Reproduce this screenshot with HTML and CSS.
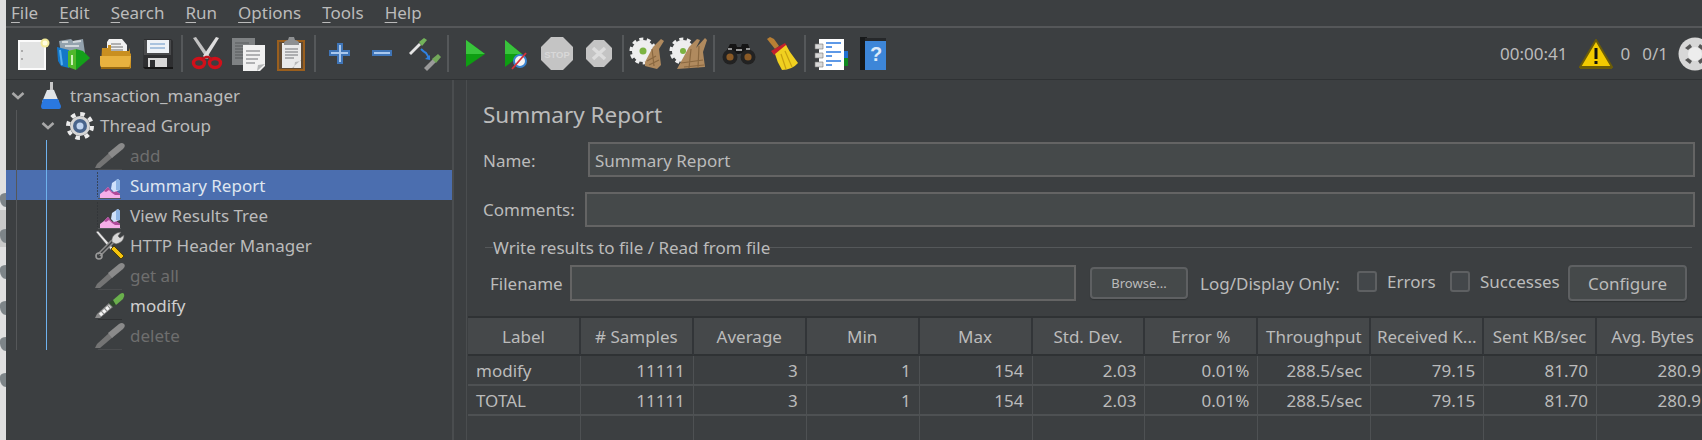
FILE: index.html
```html
<!DOCTYPE html>
<html lang="en">
<head>
<meta charset="utf-8">
<title>Apache JMeter - Summary Report</title>
<link rel="stylesheet" href="styles.css">
</head>
<body>
<svg class="defs" aria-hidden="true">
  <symbol id="chev" viewBox="0 0 24 30"><path d="M6.500 13l5.500 5 5.500-5" fill="none" stroke="#a8a8a8" stroke-width="2.600"/></symbol>
  <symbol id="pipe-off" viewBox="0 0 30 30">
    <path d="M0 28l2-4 12-11 4 4L5 28z" fill="#747474"/><path d="M13 13l11-9q3-2 5 0t-1 5L17 18z" fill="#8a8a8a"/><path d="M3 29.500h24" stroke="#4a4c4e"/>
  </symbol>
  <symbol id="pipe-on" viewBox="0 0 30 30">
    <path d="M0 28l2-4 12-11 4 4L5 28z" fill="#8c8c8c"/><path d="M5 25l10-9" stroke="#f4f4f4" stroke-width="3.400" stroke-dasharray="3 1.200"/><path d="M14 13l3-3 4 4-3 3z" fill="#2e4a2a"/><path d="M18 10l7-6q3-2 4 0t-1 5l-7 6z" fill="#6ab04c"/><path d="M3 29.500h24" stroke="#2e3032"/>
  </symbol>
  <symbol id="graph" viewBox="0 0 30 30">
    <path d="M2.500 2v25" stroke="#2f3336" stroke-opacity=".7" stroke-dasharray="2 1"/><path d="M3 28.500h23" stroke="#55585a"/>
    <path d="M5 28v-4l4-3 4-4 4 5 4-1 4 3v4z" fill="#f6aee8"/><path d="M9 21l4-4 4 5 4-1 4 3v1h-5l-3-2-3-3-3 2z" fill="#b04a9a"/>
    <path d="M16 19l1-6 6-4 2 2v9l-6 2z" fill="#cfe2fb"/><path d="M21 10l2-1 2 2v9h-4z" fill="#8fb6e6"/>
  </symbol>
  <symbol id="tools" viewBox="0 0 30 30">
    <path d="M1 2l2-1 15 17-2 2z" fill="#e8e8e8" stroke="#555" stroke-width=".5"/>
    <path d="M16 19l3-3 10 10-3 3z" fill="#f4c20d" stroke="#3a3000" stroke-width=".8"/>
    <path d="M4 25L18 11" stroke="#8e8e8e" stroke-width="4.500"/><path d="M4 25L18 11" stroke="#3c3f41" stroke-width="1.400"/>
    <circle cx="4" cy="26" r="3" fill="none" stroke="#999" stroke-width="1.600"/>
    <path d="M17 12q-1-6 5-9l4-1-3 4 2 2 4-3q0 6-5 8l-3 1z" fill="#d8d8d8" stroke="#666" stroke-width=".6"/>
  </symbol>
</svg>

<div class="strip">
  <i class="blob"></i><i class="blob"></i><i class="blob"></i><i class="blob"></i><i class="blob"></i><i class="blob"></i>
</div>

<div class="app">
  <nav class="menubar">
    <span><u>F</u>ile</span><span><u>E</u>dit</span><span><u>S</u>earch</span><span><u>R</u>un</span><span><u>O</u>ptions</span><span><u>T</u>ools</span><span><u>H</u>elp</span>
  </nav>

  <div class="toolbar">
    <!-- new -->
    <svg class="tool" viewBox="0 0 42 36"><rect x="7" y="4" width="28" height="30" fill="#fbfbfb"/><rect x="9" y="6" width="24" height="26" fill="#e2e3e3"/><path d="M10 15h2M10 23h2" stroke="#999" stroke-width="1.500"/><circle cx="34" cy="7" r="4.500" fill="#f2ea9a"/><circle cx="34" cy="7" r="2.500" fill="#fffde0"/></svg>
    <!-- templates -->
    <svg class="tool" viewBox="0 0 42 36"><path d="M6 5l12-2 2 2 10-2 2 14H8z" fill="#93a2ad"/><path d="M9 6h6M20 6l8-1M12 10h14" stroke="#d2d8dc" stroke-width="2"/><path d="M4 11l12 3v18L8 30 5 25z" fill="#1477c9"/><path d="M7 14l2 15" stroke="#54b0ee" stroke-width="2"/><path d="M15 15l8-2v21l-8-3z" fill="#4fb82b"/><path d="M23 13l7 2 7 7-7 6-7 6z" fill="#14a01a"/><path d="M19 19v10" stroke="#cdf0b8" stroke-width="2"/></svg>
    <!-- open -->
    <svg class="tool" viewBox="0 0 42 36"><path d="M12 6l2-3h13l5 6v10H12z" fill="#f1f1f1"/><path d="M16 8h10M16 11h12M16 14h12" stroke="#9a9a9a" stroke-width="1.400"/><path d="M7 12h6v-3h3v6h18l1-3v5l1 1v14q-1 1-3 1H9q-3-1-3-3z" fill="#c98f20"/><path d="M5 20h31l-1 8q-1 4-3 4H9q-4 0-4-4z" fill="#e8b23f"/><path d="M6 32h29" stroke="#9a6a10" stroke-width="2"/></svg>
    <!-- save -->
    <svg class="tool" viewBox="0 0 42 36"><path d="M7 3h27l2 2v28H8l-2-2z" fill="#2e2f31"/><path d="M7 4h27v15H7z" fill="#4a4b4d"/><rect x="10" y="4" width="22" height="13" fill="#eef2f6"/><path d="M13 8h15M13 12h15" stroke="#a9c3de" stroke-width="2"/><rect x="11" y="22" width="19" height="11" fill="#d8d8d8"/><rect x="13" y="24" width="5" height="8" fill="#2e2f31"/><path d="M6 31h30v2H8z" fill="#171717"/></svg>
    <i class="sep"></i>
    <!-- cut -->
    <svg class="tool" viewBox="0 0 42 36"><path d="M7 2l3-1 14 20-3 2z" fill="#c2c2c2"/><path d="M33 2l-3-1-13 19 3 3z" fill="#dedede"/><ellipse cx="13" cy="27" rx="5.500" ry="4.500" fill="none" stroke="#d0101a" stroke-width="3.400"/><ellipse cx="29" cy="27" rx="5.500" ry="4.500" fill="none" stroke="#d0101a" stroke-width="3.400"/><path d="M16 23l4-2h2l4 2" fill="none" stroke="#c0101a" stroke-width="2.400"/></svg>
    <!-- copy -->
    <svg class="tool" viewBox="0 0 42 36"><rect x="4" y="2" width="23" height="27" fill="#7f8284"/><path d="M7 7h14M7 10h14M7 13h14M7 16h14M7 19h14M7 22h14" stroke="#65686a" stroke-width="1.400"/><path d="M15 9h22v21l-5 5H15z" fill="#f1f1f1"/><path d="M18 15h14M18 19h14M18 23h12M18 27h9" stroke="#9a9c9e" stroke-width="1.400"/><path d="M37 28l-7 1-1 6z" fill="#b5b7b8"/></svg>
    <!-- paste -->
    <svg class="tool" viewBox="0 0 42 36"><rect x="7" y="4" width="28" height="31" fill="#9a5f1e"/><rect x="9" y="6" width="24" height="27" fill="#5f4a33"/><rect x="12" y="7" width="19" height="25" fill="#eaeaea"/><path d="M15 13h13M15 16h13M15 19h13M15 22h9" stroke="#9a9c9e" stroke-width="1.300"/><path d="M31 25l-6 1-1 6h-2l9-8z" fill="#b9b9b9"/><path d="M14 7q0-2 4-3l1-3h5l1 3q4 1 4 3v2H14z" fill="#8e9092"/></svg>
    <i class="sep"></i>
    <!-- plus -->
    <svg class="tool" viewBox="0 0 42 36"><path d="M18 7h6v7h7v6h-7v8h-6v-8h-8v-6h8z" fill="#3f75b8"/><path d="M20 9h2v7h7v2h-7v8h-2v-8h-8v-2h8z" fill="#a9c8ee"/></svg>
    <!-- minus -->
    <svg class="tool" viewBox="0 0 42 36"><rect x="11" y="14" width="20" height="6" fill="#3f75b8"/><rect x="13" y="16" width="16" height="2" fill="#a9c8ee"/></svg>
    <!-- toggle -->
    <svg class="tool" viewBox="0 0 42 36"><path d="M6 17l10-10 2 2-10 10z" fill="#e4e4e4"/><path d="M16 6l5-4 3 2-5 6z" fill="#73b45a"/><path d="M18 13q3 3 5 4l3 5" fill="none" stroke="#2f80e0" stroke-width="2"/><path d="M22 23l5 1 0-5z" fill="#2f80e0"/><path d="M21 32l9-9 3 3-9 9z" fill="#9a9a9a"/><path d="M29 23l6-5 3 3-5 6z" fill="#73a85a"/></svg>
    <i class="sep"></i>
    <!-- start -->
    <svg class="tool" viewBox="0 0 42 36"><path d="M14 4l19 14-19 13z" fill="#0e9e12"/><path d="M14 4l19 14H14z" fill="#39c43c"/></svg>
    <!-- start no timers -->
    <svg class="tool" viewBox="0 0 42 36"><path d="M11 4l17 14-17 13z" fill="#0e9e12"/><path d="M11 4l17 14H11z" fill="#39c43c"/><circle cx="26" cy="25" r="6" fill="#f4f4f4" stroke="#3a84d0" stroke-width="2"/><path d="M18 33L32 17" stroke="#d8323a" stroke-width="1.800"/></svg>
    <!-- stop -->
    <svg class="tool" viewBox="0 0 42 36"><path d="M15 1h12l10 10v13L27 34H15L5 24V11z" fill="#c4c4c4"/><text x="21" y="22" class="stop">STOP</text></svg>
    <!-- shutdown -->
    <svg class="tool" viewBox="0 0 42 36"><path d="M16 4h10l8 8v11l-8 8H16l-8-8V12z" fill="#c4c4c4"/><path d="M15 12l12 11M27 12L15 23" stroke="#dcdcdc" stroke-width="3.400"/></svg>
    <i class="sep"></i>
    <!-- clear -->
    <svg class="tool" viewBox="0 0 42 36"><circle cx="16" cy="15" r="11" fill="#eeeeee"/><circle cx="16" cy="15" r="12" fill="none" stroke="#eee" stroke-width="3" stroke-dasharray="4 3.500"/><circle cx="16" cy="15" r="3.500" fill="#7cb342"/><path d="M18 26l8-15 8-8 3 2-5 8 2 16-4 4-12-3z" fill="#b08a5e"/><path d="M20 25l9-5M22 29l10-5M25 13l2 17" stroke="#8a6840" stroke-width="1.200"/></svg>
    <!-- clear all -->
    <svg class="tool" viewBox="0 0 42 36"><circle cx="14" cy="15" r="11" fill="#eeeeee"/><circle cx="14" cy="15" r="12" fill="none" stroke="#eee" stroke-width="3" stroke-dasharray="4 3.500"/><circle cx="14" cy="15" r="3" fill="#7cb342"/><path d="M8 33l12-22 8-8 3 1-4 8 9-10 2 2-4 12 2 15z" fill="#b08a5e"/><path d="M12 27l22-3M15 31l20-2M22 13l-2 19M30 10l-1 22" stroke="#8a6840" stroke-width="1.200"/></svg>
    <i class="sep"></i>
    <!-- search -->
    <svg class="tool" viewBox="0 0 42 36"><path d="M12 8h6l1 3h4l1-3h6l3 8-13 2-12-2z" fill="#151515"/><circle cx="12" cy="21" r="7.500" fill="#222"/><circle cx="30" cy="21" r="7.500" fill="#222"/><circle cx="12" cy="21" r="3.600" fill="#8a5a26"/><circle cx="30" cy="21" r="3.600" fill="#8a5a26"/><path d="M10 13h4M28 13h4" stroke="#bbb" stroke-width="1.500"/><path d="M18 14h6" stroke="#999" stroke-width="2"/></svg>
    <!-- broom -->
    <svg class="tool" viewBox="0 0 42 36"><path d="M7 3l3-2 4 2 5 7-4 3z" fill="#b87f34"/><path d="M11 15l14-8 2 3-13 9z" fill="#c2202c"/><path d="M15 18l11-9 4 7 8 11q-6 7-16 7-5-8-7-16z" fill="#f0d020"/><path d="M21 18l5 15M25 15l7 16" stroke="#c8a010" stroke-width="1.200"/></svg>
    <i class="sep"></i>
    <!-- function helper -->
    <svg class="tool" viewBox="0 0 42 36"><rect x="10" y="3" width="25" height="31" fill="#fff"/><path d="M35 15h4v7h-4z" fill="#2070d0"/><path d="M35 22h4v8h-4z" fill="#108a20"/><path d="M6 8h8v5H6zM6 17h8v5H6zM6 26h8v5H6z" fill="#d8d8d8" stroke="#777" stroke-width=".6"/><path d="M17 7h15M17 16h15M17 25h15" stroke="#2a78e0" stroke-width="1.600"/><path d="M17 11h6M17 20h6M17 29h6" stroke="#2a78e0" stroke-width="1.600"/></svg>
    <!-- help -->
    <svg class="tool" viewBox="0 0 42 36"><rect x="9" y="1" width="7" height="33" fill="#17191a"/><rect x="14" y="5" width="21" height="29" fill="#3d86d8"/><path d="M14 2h21v3H14z" fill="#26282a"/><text x="25" y="25" class="qm">?</text></svg>

    <div class="status">
      <span class="time">00:00:41</span>
      <svg class="warn" viewBox="0 0 34 30"><path d="M17 1L33 28H1z" fill="#f2ca00" stroke="#6b5c08" stroke-width="2"/><path d="M1 28.500h32" stroke="#6b5c08" stroke-width="3"/><rect x="15.500" y="9" width="3" height="11" fill="#111"/><rect x="15.500" y="22" width="3" height="3" fill="#111"/></svg>
      <span class="count">0</span>
      <span class="threads">0/1</span>
      <svg class="globe" viewBox="0 0 34 34"><circle cx="17" cy="17" r="16.500" fill="#d7d7d7"/><circle cx="17" cy="17" r="7" fill="#ededed"/><path d="M7 11l5-4 2 3-4 3zM27 11l-5-4-2 3 4 3zM7 23l5 4 2-3-4-3zM27 23l-5 4-2-3 4-3z" fill="#555"/></svg>
    </div>
  </div>

  <div class="workspace">
    <aside class="tree">
      <i class="guide guide-root"></i>
      <i class="guide guide-group"></i>
      <div class="node d0">
        <svg class="chev"><use href="#chev"/></svg>
        <svg class="ico" viewBox="0 0 30 30"><path d="M15 2h3v7l1 2h-5l1-2z" fill="#c8c8c8"/><path d="M12 10h7l5 12H7z" fill="#e0e4e8"/><path d="M8 19h15l3 7q0 3-2 3H8q-2 0-2-3z" fill="#2a78e0"/></svg>
        <span>transaction_manager</span>
      </div>
      <div class="node d1">
        <svg class="chev"><use href="#chev"/></svg>
        <svg class="ico" viewBox="0 0 30 30"><circle cx="15" cy="16" r="10" fill="#d6d6d6"/><circle cx="15" cy="16" r="12" fill="none" stroke="#ececec" stroke-width="4" stroke-dasharray="4.500 4.900"/><circle cx="15" cy="16" r="7" fill="#48648c"/><circle cx="15" cy="16" r="3.500" fill="#c0d4f0"/></svg>
        <span>Thread Group</span>
      </div>
      <div class="node d2 off"><svg class="ico"><use href="#pipe-off"/></svg><span>add</span></div>
      <div class="node d2 selected"><svg class="ico"><use href="#graph"/></svg><span>Summary Report</span></div>
      <div class="node d2"><svg class="ico"><use href="#graph"/></svg><span>View Results Tree</span></div>
      <div class="node d2"><svg class="ico"><use href="#tools"/></svg><span>HTTP Header Manager</span></div>
      <div class="node d2 off"><svg class="ico"><use href="#pipe-off"/></svg><span>get all</span></div>
      <div class="node d2 on"><svg class="ico"><use href="#pipe-on"/></svg><span>modify</span></div>
      <div class="node d2 off"><svg class="ico"><use href="#pipe-off"/></svg><span>delete</span></div>
    </aside>

    <div class="gutter"></div>

    <main class="panel">
      <h1 class="title">Summary Report</h1>
      <div class="field-row name-row">
        <label class="name-label">Name:</label>
        <div class="input">Summary Report</div>
      </div>
      <div class="field-row comments-row">
        <label class="comments-label">Comments:</label>
        <div class="input"></div>
      </div>
      <div class="legend"><i class="rule rule-short"></i><span>Write results to file / Read from file</span><i class="rule"></i></div>
      <div class="file-row">
        <label class="file-label">Filename</label>
        <div class="input file-input"></div>
        <button class="btn browse">Browse...</button>
        <span class="log-label">Log/Display Only:</span>
        <span class="check"></span><span class="check-text errors">Errors</span>
        <span class="check"></span><span class="check-text successes">Successes</span>
        <button class="btn configure">Configure</button>
      </div>
      <div class="table-wrap">
        <table class="results">
          <thead>
            <tr><th>Label</th><th># Samples</th><th>Average</th><th>Min</th><th>Max</th><th>Std. Dev.</th><th>Error %</th><th>Throughput</th><th>Received K...</th><th>Sent KB/sec</th><th>Avg. Bytes</th></tr>
          </thead>
          <tbody>
            <tr><td>modify</td><td>11111</td><td>3</td><td>1</td><td>154</td><td>2.03</td><td>0.01%</td><td>288.5/sec</td><td>79.15</td><td>81.70</td><td>280.9</td></tr>
            <tr><td>TOTAL</td><td>11111</td><td>3</td><td>1</td><td>154</td><td>2.03</td><td>0.01%</td><td>288.5/sec</td><td>79.15</td><td>81.70</td><td>280.9</td></tr>
            <tr class="empty"><td></td><td></td><td></td><td></td><td></td><td></td><td></td><td></td><td></td><td></td><td></td></tr>
          </tbody>
        </table>
      </div>
    </main>
  </div>
</div>
</body>
</html>
```

FILE: styles.css
```css
* { box-sizing: border-box; }
html, body { margin: 0; height: 100%; }
body {
  display: flex;
  width: 1702px;
  height: 440px;
  overflow: hidden;
  background: #3c3f41;
  color: #bbbbbb;
  font-family: "Noto Sans", "Open Sans", "Liberation Sans", sans-serif;
  font-size: 17px;
  font-weight: 400;
}
.defs { position: absolute; width: 0; height: 0; }

/* window behind, peeking through on the left */
.strip {
  flex: 0 0 6px;
  height: 440px;
  background: linear-gradient(#e0e0e0 210px, #c9c9c9 210px, #c9c9c9 247px, #e0e0e0 247px);
  padding-top: 193px;
  display: flex;
  flex-direction: column;
  gap: 22px;
}
.blob {
  display: block;
  width: 6px;
  height: 14px;
  background: #7d8488;
  border-radius: 8px 0 0 8px / 5px 0 0 10px;
}

.app { flex: 1; min-width: 0; display: flex; flex-direction: column; }

.menubar {
  height: 28px;
  border-bottom: 2px solid #555759;
  display: flex;
  gap: 21px;
  padding: 0 0 0 5px;
  align-items: center;
  line-height: 24px;
}
.menubar u { text-underline-offset: 3px; }

.toolbar {
  height: 52px;
  border-bottom: 1px solid #2f3234;
  display: flex;
  align-items: center;
  padding-left: 5px;
}
.tool { width: 42px; height: 36px; flex: none; }
.sep {
  flex: none;
  width: 2px;
  height: 37px;
  margin: 0 3px 0 2px;
  background: #55585a;
}
.stop { font: 700 9.500px "Liberation Sans", sans-serif; fill: #d8d8d8; text-anchor: middle; }
.qm { font: 700 20px "Liberation Sans", sans-serif; fill: #dceaf8; text-anchor: middle; }

.status { margin-left: auto; display: flex; align-items: center; overflow: hidden; }
.time { margin-right: 12px; }
.warn { width: 34px; height: 30px; margin-right: 7px; }
.count { margin-right: 12px; }
.threads { margin-right: 10px; }
.globe { width: 34px; height: 34px; margin-right: -10px; flex: none; }

.workspace { flex: 1; min-height: 0; display: flex; }

.tree { position: relative; flex: 0 0 446px; padding: 0; }
.guide { position: absolute; top: 30px; width: 1px; height: 240px; background: #555759; left: 10px; }
.guide-group { left: 40px; top: 60px; height: 210px; background: #6fb2ee; z-index: 2; }
.node { display: flex; align-items: center; height: 30px; gap: 5px; white-space: nowrap; }
.node span { padding-top: 1px; }
.d0 { padding-left: 0; }
.d1 { padding-left: 30px; }
.d2 { padding-left: 89px; }
.chev { width: 24px; height: 30px; flex: none; }
.ico { width: 30px; height: 30px; flex: none; }
.off { color: #6e6e6e; }
.on { color: #cfcfcf; }
.selected { background: #4b6eaf; color: #dfe6f0; }

.gutter {
  flex: 0 0 15px;
  border-left: 2px solid #4a4d4f;
  border-right: 1px solid #4a4d4f;
}

.panel { flex: 1; min-width: 0; overflow: hidden; padding-top: 20px; }
.title { margin: 0 0 0 16px; height: 30px; line-height: 30px; font-size: 22.500px; font-weight: 400; }
.field-row { display: flex; align-items: center; height: 35px; margin-right: 7px; padding-left: 16px; }
.name-row { margin-top: 12px; }
.comments-row { margin-top: 15px; }
.name-label { flex: 0 0 105px; padding-top: 1px; }
.comments-label { flex: 0 0 102px; }
.input {
  flex: 1;
  height: 100%;
  background: #45494a;
  border: 2px solid #646464;
  padding: 1px 5px 0;
  line-height: 31px;
  white-space: nowrap;
}
.legend { display: flex; align-items: center; height: 28px; margin: 6px 10px 0 18px; }
.legend span { padding-top: 1px; }
.rule { flex: 1; height: 1px; background: #55585a; }
.rule-short { flex: 0 0 8px; }
.file-row { display: flex; align-items: center; height: 36px; margin-top: 4px; padding-left: 23px; }
.file-label { flex: 0 0 80px; padding-top: 1px; }
.file-input { flex: 0 0 506px; }
.btn {
  font: inherit;
  color: #bbbbbb;
  background: #45494a;
  border: 2px solid #5e6062;
  border-radius: 4px;
  padding: 0;
  box-shadow: 0 1px 1px #2f3234;
}
.browse { flex: 0 0 98px; height: 32px; margin-left: 14px; font-size: 13px; }
.log-label { margin-left: 12px; flex: 0 0 157px; padding-top: 1px; white-space: nowrap; }
.check { flex: 0 0 20px; height: 21px; margin-top: -4px; border: 2px solid #5e6062; border-radius: 3px; background: #43474a; }
.check-text { margin: -3px 0 0 10px; flex: none; }
.errors { width: 63px; }
.successes { width: 78px; }
.configure { flex: 0 0 119px; height: 36px; margin-left: 10px; }

.table-wrap { margin: 15px 0 0 1px; border-top: 2px solid #2f3234; }
.results { border-collapse: separate; border-spacing: 0; table-layout: fixed; width: 1242px; }
.results th {
  width: 112.640px;
  height: 38px;
  padding: 1px 0 0;
  background: #45484a;
  border-right: 2px solid #323538;
  border-bottom: 2px solid #2f3234;
  font-weight: 400;
  text-align: center;
  white-space: nowrap;
  overflow: hidden;
}
.results td {
  height: 30px;
  padding: 1px 8px 0;
  border-right: 1px solid #4e5153;
  border-bottom: 2px solid #4e5153;
  text-align: right;
  white-space: nowrap;
}
.results td:first-child { text-align: left; }
.results tr.empty td { height: 26px; border-bottom: 0; }
```
